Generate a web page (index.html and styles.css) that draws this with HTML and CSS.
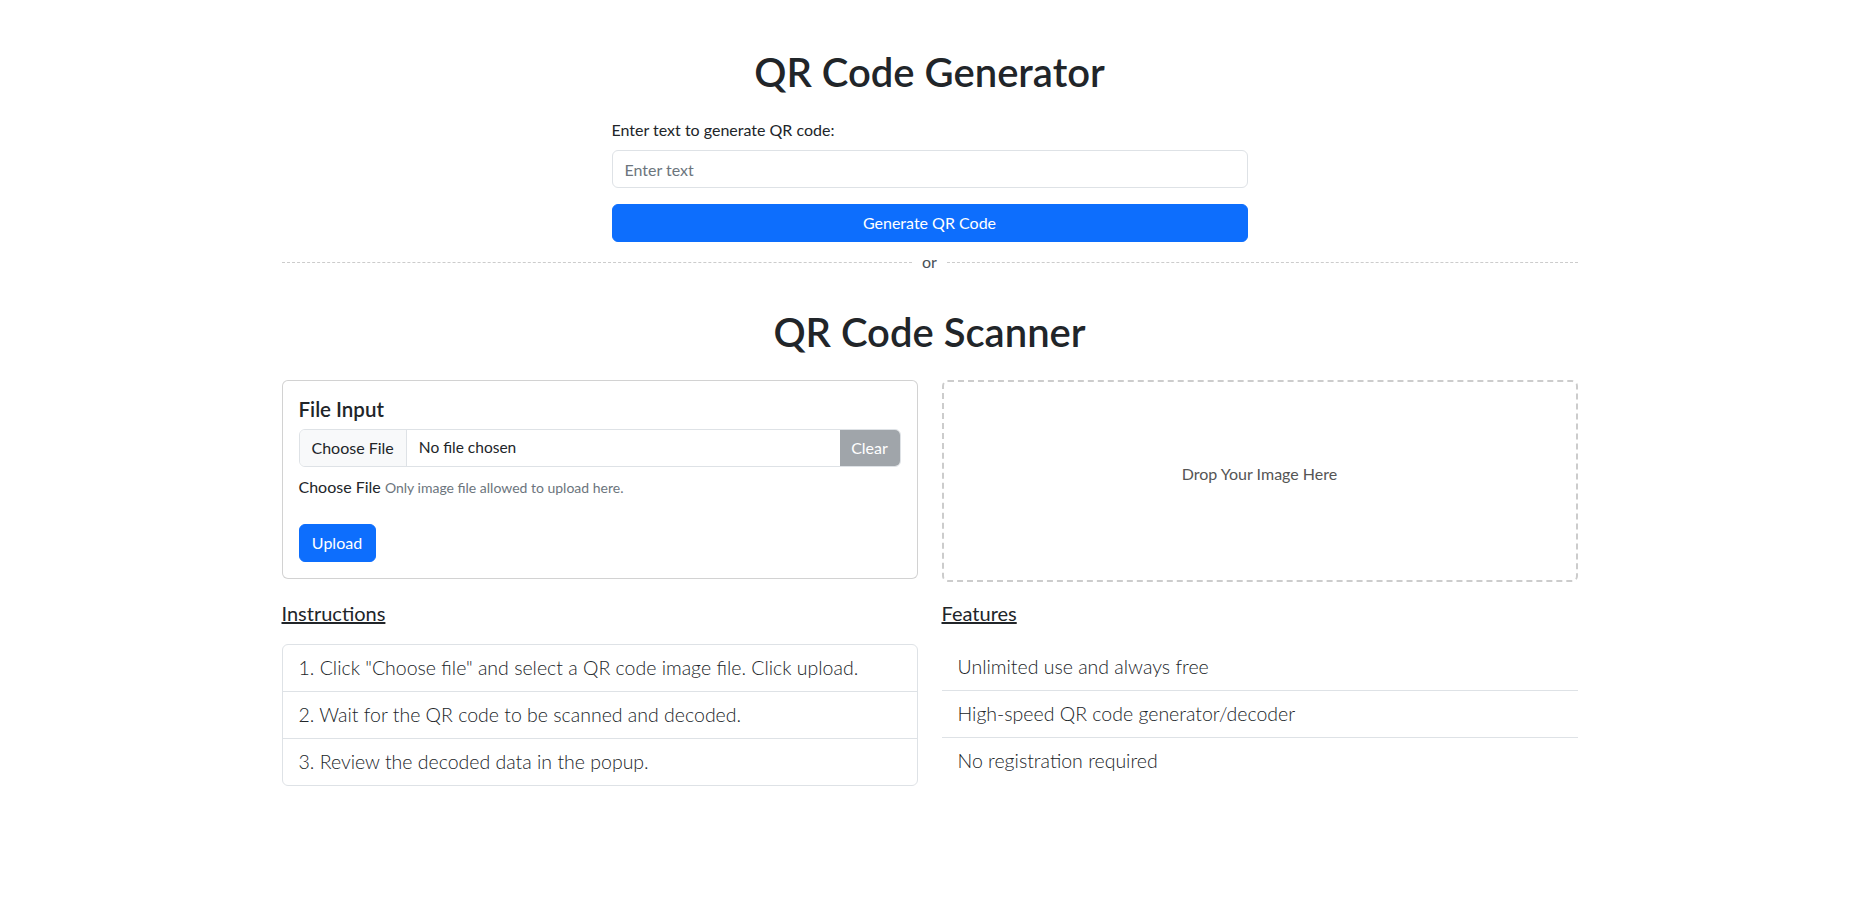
FILE: index.html
```html
<!DOCTYPE html>
<html lang="en">
<head>
<meta charset="utf-8">
<title>QR Code Generator &amp; Scanner</title>
<link rel="stylesheet" href="styles.css">
</head>
<body>
<main class="container">
  <section class="generator">
    <h1 class="page-title gen-title">QR Code Generator</h1>
    <form class="gen-form">
      <label class="form-label" for="qrtext">Enter text to generate QR code:</label>
      <input class="form-control" id="qrtext" type="text" placeholder="Enter text">
      <button type="button" class="btn btn-primary btn-block">Generate QR Code</button>
    </form>
  </section>

  <div class="divider"><span class="divider-line"></span><span class="divider-text">or</span><span class="divider-line"></span></div>

  <section class="scanner">
    <h1 class="page-title scan-title">QR Code Scanner</h1>
    <div class="grid-row top-row">
      <div class="card">
        <div class="card-body">
          <h5 class="card-title">File Input</h5>
          <div class="input-group">
            <span class="file-btn">Choose File</span>
            <span class="file-name">No file chosen</span>
            <span class="btn-clear">Clear</span>
          </div>
          <p class="file-help">Choose File <small class="text-muted">Only image file allowed to upload here.</small></p>
          <button type="button" class="btn btn-primary btn-upload">Upload</button>
        </div>
      </div>
      <div class="dropzone">Drop Your Image Here</div>
    </div>

    <div class="grid-row bottom-row">
      <div class="col">
        <h5 class="section-heading"><u>Instructions</u></h5>
        <ul class="list-group">
          <li class="list-group-item">1. Click "Choose file" and select a QR code image file. Click upload.</li>
          <li class="list-group-item">2. Wait for the QR code to be scanned and decoded.</li>
          <li class="list-group-item">3. Review the decoded data in the popup.</li>
        </ul>
      </div>
      <div class="col">
        <h5 class="section-heading"><u>Features</u></h5>
        <ul class="list-group list-group-flush">
          <li class="list-group-item">Unlimited use and always free</li>
          <li class="list-group-item">High-speed QR code generator/decoder</li>
          <li class="list-group-item">No registration required</li>
        </ul>
      </div>
    </div>
  </section>
</main>
</body>
</html>
```

FILE: styles.css
```css
*, *::before, *::after { box-sizing: border-box; }

body {
  margin: 0;
  font-family: Lato, "Open Sans", "Liberation Sans", sans-serif;
  font-size: 16px;
  line-height: 1.5;
  color: #212529;
  background: #fff;
}

.container {
  max-width: 1320px;
  margin: 0 auto;
  padding: 0 12px;
  transform: translateX(1px);
}

.page-title {
  font-size: 40px;
  font-weight: 600;
  line-height: 1.2;
  text-align: center;
  margin: 0;
}

.gen-title { margin-top: 48px; margin-bottom: 22px; }

.gen-form {
  width: 636px;
  margin: 0 auto;
  display: flex;
  flex-direction: column;
}

.form-label {
  display: block;
  margin-bottom: 8px;
  font-size: 16px;
}

.form-control {
  display: block;
  width: 100%;
  height: 38px;
  padding: 6px 12px;
  font: inherit;
  font-size: 16px;
  color: #212529;
  border: 1px solid #dee2e6;
  border-radius: 6px;
  margin: 0 0 16px;
  outline: none;
}
.form-control::placeholder { color: #6c757d; }

.btn {
  display: inline-flex;
  align-items: center;
  justify-content: center;
  height: 38px;
  padding: 6px 12px;
  font: inherit;
  font-size: 16px;
  border: 1px solid transparent;
  border-radius: 6px;
  cursor: pointer;
}
.btn-primary { background: #0d6efd; border-color: #0d6efd; color: #fff; }
.btn-block { width: 100%; }

.divider {
  display: flex;
  align-items: center;
  margin-top: 8px;
  height: 24px;
}
.divider-line {
  flex: 1;
  border-top: 1px dashed #ccc;
}
.divider-text {
  padding: 0 10px;
  font-size: 16px;
  color: #495057;
  line-height: 24px;
}

.scan-title { margin-top: 34px; margin-bottom: 24px; }

.grid-row {
  display: grid;
  grid-template-columns: 1fr 1fr;
  column-gap: 24px;
  align-items: start;
}

.card {
  border: 1px solid rgba(0,0,0,.175);
  border-radius: 6px;
  background: #fff;
}
.card-body { padding: 16px; }
.card-title {
  margin: 0 0 8px;
  font-size: 20.5px;
  font-weight: 600;
  line-height: 24px;
}

.input-group {
  display: flex;
  height: 38px;
  border: 1px solid #dee2e6;
  border-radius: 6px;
  overflow: hidden;
  font-size: 16px;
}
.file-btn {
  display: flex;
  align-items: center;
  padding: 0 12px;
  background: #f8f9fa;
  border-right: 1px solid #dee2e6;
}
.file-name {
  flex: 1;
  display: flex;
  align-items: center;
  padding: 0 12px;
  font-size: 15.5px;
}
.btn-clear {
  display: flex;
  align-items: center;
  justify-content: center;
  width: 60px;
  background: #a0a5aa;
  color: #fff;
}

.file-help {
  margin: 8px 0 24px;
  font-size: 16px;
  line-height: 24px;
}
.text-muted { color: #6c757d; font-size: 14px; }

.btn-upload { width: 77px; }

.dropzone {
  height: 202px;
  padding-bottom: 14px;
  border: 2px dashed #ccc;
  border-radius: 6px;
  display: flex;
  align-items: center;
  justify-content: center;
  color: #555;
  font-size: 16px;
}

.bottom-row { margin-top: 19px; }

.section-heading {
  margin: 0 0 19px;
  font-size: 20px;
  font-weight: 400;
  line-height: 24px;
}

.list-group {
  list-style: none;
  margin: 0;
  padding: 0;
  border: 1px solid #dee2e6;
  border-radius: 6px;
}
.list-group-item {
  padding: 8px 16px;
  font-size: 19.5px;
  font-weight: 300;
  line-height: 30px;
  border-bottom: 1px solid #dee2e6;
}
.list-group-item:last-child { border-bottom: 0; }
.list-group-flush { border: 0; border-radius: 0; }
```
